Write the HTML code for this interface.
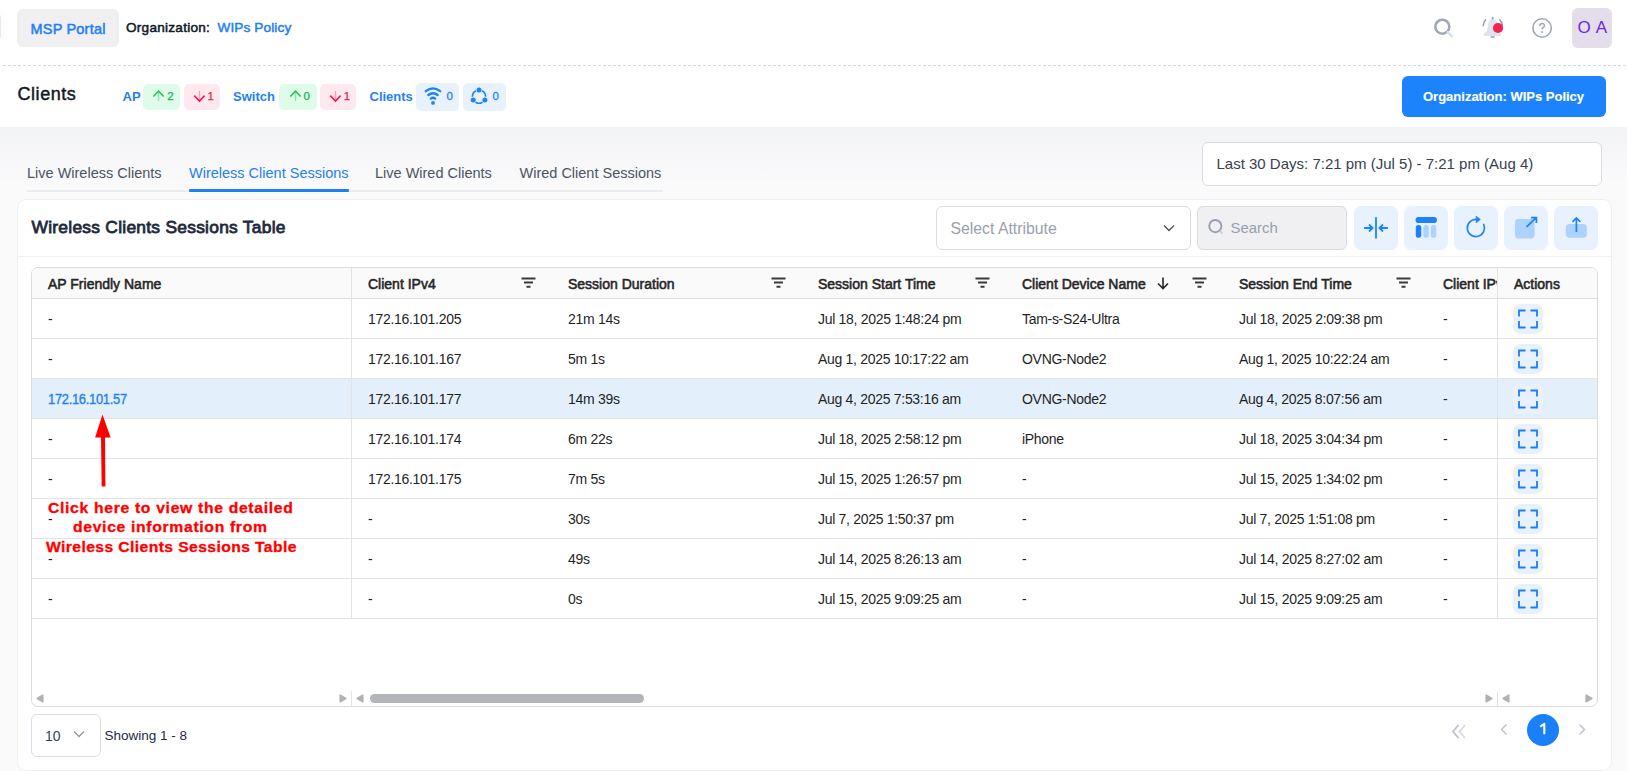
<!DOCTYPE html>
<html><head><meta charset="utf-8"><style>
html,body{margin:0;padding:0;}
body{width:1627px;height:771px;overflow:hidden;position:relative;background:#fafafb;font-family:"Liberation Sans", sans-serif;}
.t{position:absolute;white-space:nowrap;}
.b{position:absolute;}
</style></head><body>
<div class="b" style="left:0px;top:127px;width:1627px;height:58px;background:linear-gradient(rgba(20,40,90,0.03),rgba(20,40,90,0));"></div>
<div class="b" style="left:0px;top:0px;width:1627px;height:127px;background:#fff;"></div>
<div class="b" style="left:-21px;top:13px;width:22px;height:28px;border:1px solid #e9eaed;border-radius:5px;background:#fff;box-shadow:0 0 14px rgba(0,0,0,0.035);box-sizing:border-box;"></div>
<div class="b" style="left:17px;top:9px;width:102px;height:38px;background:#f0f0f3;border-radius:6px;"></div>
<div class="t" style="left:30.5px;top:21.53px;font-size:14.5px;line-height:14.5px;color:#1f7ff3;font-weight:400;letter-spacing:0.2px;-webkit-text-stroke:0.5px #1f7ff3;">MSP Portal</div>
<div class="t" style="left:126px;top:20.69px;font-size:13.6px;line-height:13.6px;color:#101828;font-weight:400;letter-spacing:0.25px;-webkit-text-stroke:0.5px #101828;">Organization:</div>
<div class="t" style="left:217.5px;top:20.69px;font-size:13.6px;line-height:13.6px;color:#1f7ff3;font-weight:400;letter-spacing:0.12px;-webkit-text-stroke:0.5px #1f7ff3;">WIPs Policy</div>
<svg class="b" style="left:1430px;top:14px" width="28" height="28" viewBox="0 0 28 28">
<circle cx="12.3" cy="12.7" r="7" fill="none" stroke="#a0a8b8" stroke-width="2.6"/>
<line x1="17.8" y1="18.2" x2="22" y2="22.4" stroke="#dde1e7" stroke-width="2.6" stroke-linecap="round"/>
</svg>
<svg class="b" style="left:1478px;top:14px" width="30" height="28" viewBox="0 0 30 28">
<path d="M10.6 8.6 Q10.8 5.8 13.6 5.8 H16 Q18.8 5.8 19 8.6 L19.8 16 Q20.2 17.8 22.6 19.2 Q23.4 19.8 23.2 20.8 Q23 21.9 21.8 21.9 H7.2 Q6 21.9 5.8 20.8 Q5.6 19.8 6.4 19.2 Q8.8 17.8 9.2 16 Z" fill="#dfe3ea"/>
<path d="M7.9 5.2 Q5.6 7.6 5.2 12.3" fill="none" stroke="#94a0b6" stroke-width="1.6"/>
<path d="M21.4 5.4 Q24 7.6 24.6 11.8" fill="none" stroke="#94a0b6" stroke-width="1.6"/>
<line x1="14.6" y1="2.9" x2="14.6" y2="5.6" stroke="#94a0b6" stroke-width="1.8"/>
<line x1="12.7" y1="23" x2="16.7" y2="23" stroke="#94a0b6" stroke-width="1.5"/>
<circle cx="20" cy="14" r="5.1" fill="#f5214e"/>
</svg>
<svg class="b" style="left:1528px;top:14px" width="28" height="28" viewBox="0 0 28 28">
<circle cx="14.1" cy="14" r="9.2" fill="none" stroke="#a0a8b8" stroke-width="1.6"/>
<path d="M11.8 11.9 Q11.8 9.6 14.1 9.6 Q16.4 9.6 16.4 11.7 Q16.4 13 14.9 13.7 Q14.1 14.1 14.1 15.4" fill="none" stroke="#a0a8b8" stroke-width="1.5"/>
<circle cx="14.1" cy="17.9" r="1" fill="#a0a8b8"/>
</svg>
<div class="b" style="left:1572px;top:8px;width:40px;height:40px;background:#e4ddeb;border-radius:6px;"></div>
<div class="t" style="left:1577.5px;top:19.31px;font-size:17px;line-height:17px;color:#6a2ae0;font-weight:400;letter-spacing:0.6px;">O A</div>
<div class="b" style="left:3px;top:65px;width:1624px;height:1px;background-image:linear-gradient(to right,#d3d8e4 0,#d3d8e4 3px,transparent 3px);background-size:5px 1px;"></div>
<div class="t" style="left:17.5px;top:85.26px;font-size:18px;line-height:18px;color:#111827;font-weight:400;letter-spacing:0.55px;-webkit-text-stroke:0.45px #111827;">Clients</div>
<div class="t" style="left:122.5px;top:89.50px;font-size:13px;line-height:13px;color:#1f7ff3;font-weight:700;letter-spacing:0px;">AP</div>
<div class="b" style="left:143px;top:84px;width:37px;height:26px;background:#dffcea;border-radius:5px;"></div>
<div class="b" style="left:184px;top:84px;width:36px;height:26px;background:#ffe9ef;border-radius:5px;"></div>
<div class="t" style="left:233px;top:89.50px;font-size:13px;line-height:13px;color:#1f7ff3;font-weight:700;letter-spacing:0px;">Switch</div>
<div class="b" style="left:279px;top:84px;width:38px;height:26px;background:#dffcea;border-radius:5px;"></div>
<div class="b" style="left:320px;top:84px;width:36px;height:26px;background:#ffe9ef;border-radius:5px;"></div>
<div class="t" style="left:369.5px;top:89.50px;font-size:13px;line-height:13px;color:#1f7ff3;font-weight:700;letter-spacing:0px;">Clients</div>
<div class="b" style="left:416px;top:83px;width:43px;height:28px;background:#e8f2fe;border-radius:5px;"></div>
<div class="b" style="left:463px;top:83px;width:43px;height:28px;background:#e8f2fe;border-radius:5px;"></div>
<svg class="b" style="left:152px;top:89px" width="14" height="14" viewBox="0 0 14 14"><path d="M6.5 2.6V11.8" stroke="#8fe0ae" stroke-width="1.4" fill="none"/><path d="M1.3 7.6 6.5 2.2 11.7 7.6" fill="none" stroke="#20c15c" stroke-width="1.5"/></svg>
<div class="t" style="left:167.3px;top:91.07px;font-size:11.5px;line-height:11.5px;color:#18b552;font-weight:400;letter-spacing:0px;-webkit-text-stroke:0.25px currentColor;">2</div>
<svg class="b" style="left:192px;top:89px" width="14" height="14" viewBox="0 0 14 14"><path d="M7.5 2V11.5" stroke="#f7a3bb" stroke-width="1.4" fill="none"/><path d="M2.2 6.6 7.5 12 12.6 6.6" fill="none" stroke="#f5174e" stroke-width="1.6"/></svg>
<div class="t" style="left:207.5px;top:91.07px;font-size:11.5px;line-height:11.5px;color:#f01a50;font-weight:400;letter-spacing:0px;-webkit-text-stroke:0.25px currentColor;">1</div>
<svg class="b" style="left:289px;top:89px" width="14" height="14" viewBox="0 0 14 14"><path d="M6.5 2.6V11.8" stroke="#8fe0ae" stroke-width="1.4" fill="none"/><path d="M1.3 7.6 6.5 2.2 11.7 7.6" fill="none" stroke="#20c15c" stroke-width="1.5"/></svg>
<div class="t" style="left:303.4px;top:91.07px;font-size:11.5px;line-height:11.5px;color:#18b552;font-weight:400;letter-spacing:0px;-webkit-text-stroke:0.25px currentColor;">0</div>
<svg class="b" style="left:328px;top:89px" width="14" height="14" viewBox="0 0 14 14"><path d="M7.5 2V11.5" stroke="#f7a3bb" stroke-width="1.4" fill="none"/><path d="M2.2 6.6 7.5 12 12.6 6.6" fill="none" stroke="#f5174e" stroke-width="1.6"/></svg>
<div class="t" style="left:343.8px;top:91.07px;font-size:11.5px;line-height:11.5px;color:#f01a50;font-weight:400;letter-spacing:0px;-webkit-text-stroke:0.25px currentColor;">1</div>
<svg class="b" style="left:416px;top:83px" width="30" height="28" viewBox="0 0 30 28">
<path d="M9.8 8.2 Q17 2.6 24.2 8.2" fill="none" stroke="#1f80fb" stroke-width="2.3" stroke-linecap="round"/>
<path d="M12.3 12 Q17 8.4 21.7 12" fill="none" stroke="#1f80fb" stroke-width="2.3" stroke-linecap="round"/>
<path d="M14.8 15.6 Q17 14 19.2 15.6" fill="none" stroke="#1f80fb" stroke-width="2.3" stroke-linecap="round"/>
<circle cx="17" cy="19.9" r="1.9" fill="#1f80fb"/>
</svg>
<div class="t" style="left:446.5px;top:91.27px;font-size:11.5px;line-height:11.5px;color:#1f80fb;font-weight:400;letter-spacing:0px;-webkit-text-stroke:0.3px #1f80fb;">0</div>
<svg class="b" style="left:463px;top:83px" width="32" height="28" viewBox="0 0 32 28">
<path d="M19.10 7.77 A6.6 6.6 0 0 1 22.60 13.83M19.50 19.20 A6.6 6.6 0 0 1 12.50 19.20M9.40 13.83 A6.6 6.6 0 0 1 12.90 7.77" fill="none" stroke="#1f80fb" stroke-width="1.6"/>
<circle cx="16" cy="7.1" r="2.5" fill="#1f80fb"/>
<circle cx="10.2" cy="17" r="2.5" fill="#1f80fb"/>
<circle cx="21.9" cy="17" r="2.5" fill="#1f80fb"/>
</svg>
<div class="t" style="left:492.5px;top:91.27px;font-size:11.5px;line-height:11.5px;color:#1f80fb;font-weight:400;letter-spacing:0px;-webkit-text-stroke:0.3px #1f80fb;">0</div>
<div class="b" style="left:1402px;top:76px;width:204px;height:41px;background:#1c83fc;border-radius:6px;"></div>
<div class="t" style="left:1423px;top:90.00px;font-size:13px;line-height:13px;color:#fff;font-weight:700;letter-spacing:0px;-webkit-text-stroke:0.15px #fff;">Organization: WIPs Policy</div>
<div class="b" style="left:27px;top:190px;width:636px;height:2px;background:#ebecee;"></div>
<div class="t" style="left:27px;top:165.73px;font-size:14.5px;line-height:14.5px;color:#4b5563;font-weight:400;letter-spacing:0px;">Live Wireless Clients</div>
<div class="t" style="left:189px;top:165.73px;font-size:14.5px;line-height:14.5px;color:#1f7ff3;font-weight:400;letter-spacing:0px;">Wireless Client Sessions</div>
<div class="b" style="left:189px;top:189px;width:160px;height:3px;background:#1f7ff3;border-radius:1px;"></div>
<div class="t" style="left:375px;top:165.73px;font-size:14.5px;line-height:14.5px;color:#4b5563;font-weight:400;letter-spacing:0px;">Live Wired Clients</div>
<div class="t" style="left:519.5px;top:165.73px;font-size:14.5px;line-height:14.5px;color:#4b5563;font-weight:400;letter-spacing:0px;">Wired Client Sessions</div>
<div class="b" style="left:1202px;top:142px;width:400px;height:44px;background:#fff;border:1px solid #d9dde6;border-radius:6px;box-sizing:border-box;"></div>
<div class="t" style="left:1216.5px;top:155.90px;font-size:15px;line-height:15px;color:#374151;font-weight:400;letter-spacing:0px;">Last 30 Days: 7:21 pm (Jul 5) - 7:21 pm (Aug 4)</div>
<div class="b" style="left:17px;top:199px;width:1595px;height:572px;background:#fff;border:1px solid #eeeff1;border-radius:9px;box-sizing:border-box;"></div>
<div class="t" style="left:31.5px;top:218.77px;font-size:17.4px;line-height:17.4px;color:#1e293b;font-weight:400;letter-spacing:0.26px;-webkit-text-stroke:0.8px #1e293b;">Wireless Clients Sessions Table</div>
<div class="b" style="left:18px;top:256px;width:1593px;height:1px;background:#eeeff1;"></div>
<div class="b" style="left:936px;top:206px;width:255px;height:44px;background:#fff;border:1px solid #d9dde6;border-radius:6px;box-sizing:border-box;"></div>
<div class="t" style="left:950.5px;top:220.63px;font-size:15.8px;line-height:15.8px;color:#9aa1ad;font-weight:400;letter-spacing:0px;">Select Attribute</div>
<svg class="b" style="left:1162px;top:222px" width="14" height="12" viewBox="0 0 14 12">
<path d="M2 3.5 7 8.5 12 3.5" fill="none" stroke="#4b5563" stroke-width="1.4"/></svg>
<div class="b" style="left:1197px;top:206px;width:150px;height:44px;background:#f0f0f3;border:1px solid #d9dde6;border-radius:6px;box-sizing:border-box;"></div>
<svg class="b" style="left:1206px;top:218px" width="20" height="20" viewBox="0 0 20 20">
<circle cx="9.3" cy="8.1" r="6.1" fill="none" stroke="#98a0b0" stroke-width="1.9"/>
<line x1="14" y1="13" x2="16.4" y2="15.5" stroke="#c9ced8" stroke-width="2"/></svg>
<div class="t" style="left:1230.5px;top:220.59px;font-size:14.9px;line-height:14.9px;color:#98a0b0;font-weight:400;letter-spacing:0px;">Search</div>
<div class="b" style="left:1354px;top:206px;width:44px;height:44px;background:#e8f2fe;border-radius:7px;"></div>
<div class="b" style="left:1404px;top:206px;width:44px;height:44px;background:#e8f2fe;border-radius:7px;"></div>
<div class="b" style="left:1454px;top:206px;width:44px;height:44px;background:#e8f2fe;border-radius:7px;"></div>
<div class="b" style="left:1504px;top:206px;width:44px;height:44px;background:#e8f2fe;border-radius:7px;"></div>
<div class="b" style="left:1554px;top:206px;width:44px;height:44px;background:#e8f2fe;border-radius:7px;"></div>
<svg class="b" style="left:1354px;top:206px" width="44" height="44" viewBox="0 0 44 44">
<line x1="22" y1="11.3" x2="22" y2="32.4" stroke="#1f80fb" stroke-width="1.8"/>
<path d="M10.1 22H18.6M15 18.5 18.6 22 15 25.5" fill="none" stroke="#1f80fb" stroke-width="1.8"/>
<path d="M33.9 22H25.4M29 18.5 25.4 22 29 25.5" fill="none" stroke="#1f80fb" stroke-width="1.8"/></svg>
<svg class="b" style="left:1404px;top:206px" width="44" height="44" viewBox="0 0 44 44">
<rect x="11.6" y="11" width="21.3" height="6" rx="2.8" fill="#1f80fb"/>
<rect x="11.8" y="19.1" width="5.5" height="12.7" rx="2.5" fill="#1f80fb"/>
<rect x="19.3" y="19.1" width="5.5" height="12.7" rx="2.5" fill="#add2fd"/>
<rect x="26.8" y="19.1" width="5.5" height="12.7" rx="2.5" fill="#add2fd"/></svg>
<svg class="b" style="left:1454px;top:206px" width="44" height="44" viewBox="0 0 44 44">
<path d="M22.6 13.4 A8.6 8.6 0 1 0 29.7 18.4" fill="none" stroke="#1f80fb" stroke-width="1.6" stroke-linecap="round"/>
<path d="M22.2 10 26.4 13.4 22.2 16.9Z" fill="#1f80fb" stroke="#1f80fb" stroke-width="0.6" stroke-linejoin="round"/></svg>
<svg class="b" style="left:1504px;top:206px" width="44" height="44" viewBox="0 0 44 44">
<rect x="11" y="13" width="19.6" height="19.4" rx="3.6" fill="#add2fd"/>
<path d="M22.6 20.8 32.2 11.6M26.9 11.6H32.4V17" fill="none" stroke="#1f80fb" stroke-width="1.8"/></svg>
<svg class="b" style="left:1554px;top:206px" width="44" height="44" viewBox="0 0 44 44">
<rect x="11.8" y="17.9" width="21.1" height="13.9" rx="4" fill="#add2fd"/>
<path d="M22.4 26V12.6M18.5 15.9 22.4 12 26.3 15.9" fill="none" stroke="#1f80fb" stroke-width="1.7"/></svg>
<div class="b" style="left:31px;top:267px;width:1567px;height:440px;border:1px solid #dcdcdc;border-radius:7px;box-sizing:border-box;background:#fff;"></div>
<div class="b" style="left:32px;top:268px;width:1565px;height:30px;background:#fafafa;border-radius:6px 6px 0 0;"></div>
<div class="b" style="left:32px;top:298px;width:1565px;height:1px;background:#dedede;"></div>
<div class="b" style="left:32px;top:338px;width:1565px;height:1px;background:#e3e3e3;"></div>
<div class="t" style="left:48px;top:312.15px;font-size:14px;line-height:14px;color:#1f1f1f;font-weight:400;letter-spacing:-0.3px;">-</div>
<div class="t" style="left:368px;top:312.15px;font-size:14px;line-height:14px;color:#1f1f1f;font-weight:400;letter-spacing:-0.3px;">172.16.101.205</div>
<div class="t" style="left:568px;top:312.15px;font-size:14px;line-height:14px;color:#1f1f1f;font-weight:400;letter-spacing:-0.3px;">21m 14s</div>
<div class="t" style="left:818px;top:312.15px;font-size:14px;line-height:14px;color:#1f1f1f;font-weight:400;letter-spacing:-0.3px;">Jul 18, 2025 1:48:24 pm</div>
<div class="t" style="left:1022px;top:312.15px;font-size:14px;line-height:14px;color:#1f1f1f;font-weight:400;letter-spacing:-0.3px;">Tam-s-S24-Ultra</div>
<div class="t" style="left:1239px;top:312.15px;font-size:14px;line-height:14px;color:#1f1f1f;font-weight:400;letter-spacing:-0.3px;">Jul 18, 2025 2:09:38 pm</div>
<div class="t" style="left:1443px;top:312.15px;font-size:14px;line-height:14px;color:#1f1f1f;font-weight:400;letter-spacing:-0.3px;">-</div>
<svg class="b" style="left:1513px;top:304px" width="30" height="30" viewBox="0 0 30 30">
<rect x="0" y="0" width="30" height="30" rx="7" fill="#e8f1fd"/>
<path d="M6 12.5V6.5H12.5M17.5 6.5H24V12.5M24 17V23.5H17.5M12.5 23.5H6V17" fill="none" stroke="#1a7ff5" stroke-width="1.8"/></svg>
<div class="b" style="left:32px;top:378px;width:1565px;height:1px;background:#e3e3e3;"></div>
<div class="t" style="left:48px;top:352.15px;font-size:14px;line-height:14px;color:#1f1f1f;font-weight:400;letter-spacing:-0.3px;">-</div>
<div class="t" style="left:368px;top:352.15px;font-size:14px;line-height:14px;color:#1f1f1f;font-weight:400;letter-spacing:-0.3px;">172.16.101.167</div>
<div class="t" style="left:568px;top:352.15px;font-size:14px;line-height:14px;color:#1f1f1f;font-weight:400;letter-spacing:-0.3px;">5m 1s</div>
<div class="t" style="left:818px;top:352.15px;font-size:14px;line-height:14px;color:#1f1f1f;font-weight:400;letter-spacing:-0.3px;">Aug 1, 2025 10:17:22 am</div>
<div class="t" style="left:1022px;top:352.15px;font-size:14px;line-height:14px;color:#1f1f1f;font-weight:400;letter-spacing:-0.3px;">OVNG-Node2</div>
<div class="t" style="left:1239px;top:352.15px;font-size:14px;line-height:14px;color:#1f1f1f;font-weight:400;letter-spacing:-0.3px;">Aug 1, 2025 10:22:24 am</div>
<div class="t" style="left:1443px;top:352.15px;font-size:14px;line-height:14px;color:#1f1f1f;font-weight:400;letter-spacing:-0.3px;">-</div>
<svg class="b" style="left:1513px;top:344px" width="30" height="30" viewBox="0 0 30 30">
<rect x="0" y="0" width="30" height="30" rx="7" fill="#e8f1fd"/>
<path d="M6 12.5V6.5H12.5M17.5 6.5H24V12.5M24 17V23.5H17.5M12.5 23.5H6V17" fill="none" stroke="#1a7ff5" stroke-width="1.8"/></svg>
<div class="b" style="left:32px;top:379px;width:1565px;height:39px;background:#e3f0fc;"></div>
<div class="b" style="left:32px;top:418px;width:1565px;height:1px;background:#e3e3e3;"></div>
<div class="t" style="left:48px;top:392.15px;font-size:14px;line-height:14px;color:#1f7ff3;font-weight:400;letter-spacing:-0.3px;-webkit-text-stroke:0.35px #1f7ff3;transform:scaleX(0.92);transform-origin:0 0;">172.16.101.57</div>
<div class="t" style="left:368px;top:392.15px;font-size:14px;line-height:14px;color:#1f1f1f;font-weight:400;letter-spacing:-0.3px;">172.16.101.177</div>
<div class="t" style="left:568px;top:392.15px;font-size:14px;line-height:14px;color:#1f1f1f;font-weight:400;letter-spacing:-0.3px;">14m 39s</div>
<div class="t" style="left:818px;top:392.15px;font-size:14px;line-height:14px;color:#1f1f1f;font-weight:400;letter-spacing:-0.3px;">Aug 4, 2025 7:53:16 am</div>
<div class="t" style="left:1022px;top:392.15px;font-size:14px;line-height:14px;color:#1f1f1f;font-weight:400;letter-spacing:-0.3px;">OVNG-Node2</div>
<div class="t" style="left:1239px;top:392.15px;font-size:14px;line-height:14px;color:#1f1f1f;font-weight:400;letter-spacing:-0.3px;">Aug 4, 2025 8:07:56 am</div>
<div class="t" style="left:1443px;top:392.15px;font-size:14px;line-height:14px;color:#1f1f1f;font-weight:400;letter-spacing:-0.3px;">-</div>
<svg class="b" style="left:1513px;top:384px" width="30" height="30" viewBox="0 0 30 30">
<rect x="0" y="0" width="30" height="30" rx="7" fill="#e8f1fd"/>
<path d="M6 12.5V6.5H12.5M17.5 6.5H24V12.5M24 17V23.5H17.5M12.5 23.5H6V17" fill="none" stroke="#1a7ff5" stroke-width="1.8"/></svg>
<div class="b" style="left:32px;top:458px;width:1565px;height:1px;background:#e3e3e3;"></div>
<div class="t" style="left:48px;top:432.15px;font-size:14px;line-height:14px;color:#1f1f1f;font-weight:400;letter-spacing:-0.3px;">-</div>
<div class="t" style="left:368px;top:432.15px;font-size:14px;line-height:14px;color:#1f1f1f;font-weight:400;letter-spacing:-0.3px;">172.16.101.174</div>
<div class="t" style="left:568px;top:432.15px;font-size:14px;line-height:14px;color:#1f1f1f;font-weight:400;letter-spacing:-0.3px;">6m 22s</div>
<div class="t" style="left:818px;top:432.15px;font-size:14px;line-height:14px;color:#1f1f1f;font-weight:400;letter-spacing:-0.3px;">Jul 18, 2025 2:58:12 pm</div>
<div class="t" style="left:1022px;top:432.15px;font-size:14px;line-height:14px;color:#1f1f1f;font-weight:400;letter-spacing:-0.3px;">iPhone</div>
<div class="t" style="left:1239px;top:432.15px;font-size:14px;line-height:14px;color:#1f1f1f;font-weight:400;letter-spacing:-0.3px;">Jul 18, 2025 3:04:34 pm</div>
<div class="t" style="left:1443px;top:432.15px;font-size:14px;line-height:14px;color:#1f1f1f;font-weight:400;letter-spacing:-0.3px;">-</div>
<svg class="b" style="left:1513px;top:424px" width="30" height="30" viewBox="0 0 30 30">
<rect x="0" y="0" width="30" height="30" rx="7" fill="#e8f1fd"/>
<path d="M6 12.5V6.5H12.5M17.5 6.5H24V12.5M24 17V23.5H17.5M12.5 23.5H6V17" fill="none" stroke="#1a7ff5" stroke-width="1.8"/></svg>
<div class="b" style="left:32px;top:498px;width:1565px;height:1px;background:#e3e3e3;"></div>
<div class="t" style="left:48px;top:472.15px;font-size:14px;line-height:14px;color:#1f1f1f;font-weight:400;letter-spacing:-0.3px;">-</div>
<div class="t" style="left:368px;top:472.15px;font-size:14px;line-height:14px;color:#1f1f1f;font-weight:400;letter-spacing:-0.3px;">172.16.101.175</div>
<div class="t" style="left:568px;top:472.15px;font-size:14px;line-height:14px;color:#1f1f1f;font-weight:400;letter-spacing:-0.3px;">7m 5s</div>
<div class="t" style="left:818px;top:472.15px;font-size:14px;line-height:14px;color:#1f1f1f;font-weight:400;letter-spacing:-0.3px;">Jul 15, 2025 1:26:57 pm</div>
<div class="t" style="left:1022px;top:472.15px;font-size:14px;line-height:14px;color:#1f1f1f;font-weight:400;letter-spacing:-0.3px;">-</div>
<div class="t" style="left:1239px;top:472.15px;font-size:14px;line-height:14px;color:#1f1f1f;font-weight:400;letter-spacing:-0.3px;">Jul 15, 2025 1:34:02 pm</div>
<div class="t" style="left:1443px;top:472.15px;font-size:14px;line-height:14px;color:#1f1f1f;font-weight:400;letter-spacing:-0.3px;">-</div>
<svg class="b" style="left:1513px;top:464px" width="30" height="30" viewBox="0 0 30 30">
<rect x="0" y="0" width="30" height="30" rx="7" fill="#e8f1fd"/>
<path d="M6 12.5V6.5H12.5M17.5 6.5H24V12.5M24 17V23.5H17.5M12.5 23.5H6V17" fill="none" stroke="#1a7ff5" stroke-width="1.8"/></svg>
<div class="b" style="left:32px;top:538px;width:1565px;height:1px;background:#e3e3e3;"></div>
<div class="t" style="left:48px;top:512.15px;font-size:14px;line-height:14px;color:#1f1f1f;font-weight:400;letter-spacing:-0.3px;">-</div>
<div class="t" style="left:368px;top:512.15px;font-size:14px;line-height:14px;color:#1f1f1f;font-weight:400;letter-spacing:-0.3px;">-</div>
<div class="t" style="left:568px;top:512.15px;font-size:14px;line-height:14px;color:#1f1f1f;font-weight:400;letter-spacing:-0.3px;">30s</div>
<div class="t" style="left:818px;top:512.15px;font-size:14px;line-height:14px;color:#1f1f1f;font-weight:400;letter-spacing:-0.3px;">Jul 7, 2025 1:50:37 pm</div>
<div class="t" style="left:1022px;top:512.15px;font-size:14px;line-height:14px;color:#1f1f1f;font-weight:400;letter-spacing:-0.3px;">-</div>
<div class="t" style="left:1239px;top:512.15px;font-size:14px;line-height:14px;color:#1f1f1f;font-weight:400;letter-spacing:-0.3px;">Jul 7, 2025 1:51:08 pm</div>
<div class="t" style="left:1443px;top:512.15px;font-size:14px;line-height:14px;color:#1f1f1f;font-weight:400;letter-spacing:-0.3px;">-</div>
<svg class="b" style="left:1513px;top:504px" width="30" height="30" viewBox="0 0 30 30">
<rect x="0" y="0" width="30" height="30" rx="7" fill="#e8f1fd"/>
<path d="M6 12.5V6.5H12.5M17.5 6.5H24V12.5M24 17V23.5H17.5M12.5 23.5H6V17" fill="none" stroke="#1a7ff5" stroke-width="1.8"/></svg>
<div class="b" style="left:32px;top:578px;width:1565px;height:1px;background:#e3e3e3;"></div>
<div class="t" style="left:48px;top:552.15px;font-size:14px;line-height:14px;color:#1f1f1f;font-weight:400;letter-spacing:-0.3px;">-</div>
<div class="t" style="left:368px;top:552.15px;font-size:14px;line-height:14px;color:#1f1f1f;font-weight:400;letter-spacing:-0.3px;">-</div>
<div class="t" style="left:568px;top:552.15px;font-size:14px;line-height:14px;color:#1f1f1f;font-weight:400;letter-spacing:-0.3px;">49s</div>
<div class="t" style="left:818px;top:552.15px;font-size:14px;line-height:14px;color:#1f1f1f;font-weight:400;letter-spacing:-0.3px;">Jul 14, 2025 8:26:13 am</div>
<div class="t" style="left:1022px;top:552.15px;font-size:14px;line-height:14px;color:#1f1f1f;font-weight:400;letter-spacing:-0.3px;">-</div>
<div class="t" style="left:1239px;top:552.15px;font-size:14px;line-height:14px;color:#1f1f1f;font-weight:400;letter-spacing:-0.3px;">Jul 14, 2025 8:27:02 am</div>
<div class="t" style="left:1443px;top:552.15px;font-size:14px;line-height:14px;color:#1f1f1f;font-weight:400;letter-spacing:-0.3px;">-</div>
<svg class="b" style="left:1513px;top:544px" width="30" height="30" viewBox="0 0 30 30">
<rect x="0" y="0" width="30" height="30" rx="7" fill="#e8f1fd"/>
<path d="M6 12.5V6.5H12.5M17.5 6.5H24V12.5M24 17V23.5H17.5M12.5 23.5H6V17" fill="none" stroke="#1a7ff5" stroke-width="1.8"/></svg>
<div class="b" style="left:32px;top:618px;width:1565px;height:1px;background:#e3e3e3;"></div>
<div class="t" style="left:48px;top:592.15px;font-size:14px;line-height:14px;color:#1f1f1f;font-weight:400;letter-spacing:-0.3px;">-</div>
<div class="t" style="left:368px;top:592.15px;font-size:14px;line-height:14px;color:#1f1f1f;font-weight:400;letter-spacing:-0.3px;">-</div>
<div class="t" style="left:568px;top:592.15px;font-size:14px;line-height:14px;color:#1f1f1f;font-weight:400;letter-spacing:-0.3px;">0s</div>
<div class="t" style="left:818px;top:592.15px;font-size:14px;line-height:14px;color:#1f1f1f;font-weight:400;letter-spacing:-0.3px;">Jul 15, 2025 9:09:25 am</div>
<div class="t" style="left:1022px;top:592.15px;font-size:14px;line-height:14px;color:#1f1f1f;font-weight:400;letter-spacing:-0.3px;">-</div>
<div class="t" style="left:1239px;top:592.15px;font-size:14px;line-height:14px;color:#1f1f1f;font-weight:400;letter-spacing:-0.3px;">Jul 15, 2025 9:09:25 am</div>
<div class="t" style="left:1443px;top:592.15px;font-size:14px;line-height:14px;color:#1f1f1f;font-weight:400;letter-spacing:-0.3px;">-</div>
<svg class="b" style="left:1513px;top:584px" width="30" height="30" viewBox="0 0 30 30">
<rect x="0" y="0" width="30" height="30" rx="7" fill="#e8f1fd"/>
<path d="M6 12.5V6.5H12.5M17.5 6.5H24V12.5M24 17V23.5H17.5M12.5 23.5H6V17" fill="none" stroke="#1a7ff5" stroke-width="1.8"/></svg>
<div class="t" style="left:48px;top:277.15px;font-size:14px;line-height:14px;color:#262626;font-weight:400;letter-spacing:0px;-webkit-text-stroke:0.55px #262626;">AP Friendly Name</div>
<div class="t" style="left:368px;top:277.15px;font-size:14px;line-height:14px;color:#262626;font-weight:400;letter-spacing:0px;-webkit-text-stroke:0.55px #262626;">Client IPv4</div>
<div class="t" style="left:568px;top:277.15px;font-size:14px;line-height:14px;color:#262626;font-weight:400;letter-spacing:0px;-webkit-text-stroke:0.55px #262626;">Session Duration</div>
<div class="t" style="left:818px;top:277.15px;font-size:14px;line-height:14px;color:#262626;font-weight:400;letter-spacing:0px;-webkit-text-stroke:0.55px #262626;">Session Start Time</div>
<div class="t" style="left:1022px;top:277.15px;font-size:14px;line-height:14px;color:#262626;font-weight:400;letter-spacing:0px;-webkit-text-stroke:0.55px #262626;">Client Device Name</div>
<div class="t" style="left:1239px;top:277.15px;font-size:14px;line-height:14px;color:#262626;font-weight:400;letter-spacing:0px;-webkit-text-stroke:0.55px #262626;">Session End Time</div>
<div class="t" style="left:1443px;top:277.15px;font-size:14px;line-height:14px;color:#262626;font-weight:400;letter-spacing:0px;-webkit-text-stroke:0.55px #262626;">Client IPv6</div>
<svg class="b" style="left:521px;top:277px" width="15" height="12" viewBox="0 0 15 12"><path d="M0.5 1.5H14.5M3 5.5H12M5.5 9.8H9.5" fill="none" stroke="#3a3a3a" stroke-width="1.9"/></svg>
<svg class="b" style="left:771px;top:277px" width="15" height="12" viewBox="0 0 15 12"><path d="M0.5 1.5H14.5M3 5.5H12M5.5 9.8H9.5" fill="none" stroke="#3a3a3a" stroke-width="1.9"/></svg>
<svg class="b" style="left:975px;top:277px" width="15" height="12" viewBox="0 0 15 12"><path d="M0.5 1.5H14.5M3 5.5H12M5.5 9.8H9.5" fill="none" stroke="#3a3a3a" stroke-width="1.9"/></svg>
<svg class="b" style="left:1192px;top:277px" width="15" height="12" viewBox="0 0 15 12"><path d="M0.5 1.5H14.5M3 5.5H12M5.5 9.8H9.5" fill="none" stroke="#3a3a3a" stroke-width="1.9"/></svg>
<svg class="b" style="left:1396px;top:277px" width="15" height="12" viewBox="0 0 15 12"><path d="M0.5 1.5H14.5M3 5.5H12M5.5 9.8H9.5" fill="none" stroke="#3a3a3a" stroke-width="1.9"/></svg>
<svg class="b" style="left:1157px;top:277px" width="12" height="13" viewBox="0 0 12 13">
<path d="M6 0.5V11.5M1 6.5 6 11.5 11 6.5" fill="none" stroke="#262626" stroke-width="1.6"/></svg>
<div class="b" style="left:1497px;top:268px;width:100px;height:438px;background:transparent;"></div>
<div class="b" style="left:1498px;top:268px;width:99px;height:30px;background:#fafafa;border-radius:0 6px 0 0;"></div>
<div class="t" style="left:1514px;top:277.15px;font-size:14px;line-height:14px;color:#262626;font-weight:400;letter-spacing:0px;-webkit-text-stroke:0.55px #262626;">Actions</div>
<div class="b" style="left:351px;top:268px;width:1px;height:350px;background:#e3e3e3;"></div>
<div class="b" style="left:1497px;top:268px;width:1px;height:350px;background:#e3e3e3;"></div>
<div class="b" style="left:351px;top:691px;width:1px;height:15px;background:#e3e3e3;"></div>
<div class="b" style="left:1497px;top:691px;width:1px;height:15px;background:#e3e3e3;"></div>
<svg class="b" style="left:36px;top:694px" width="8" height="9" viewBox="0 0 8 9"><path d="M6.8 1.2V7.8L1.2 4.5Z" fill="#b1b2b7" stroke="#b1b2b7" stroke-width="1.6" stroke-linejoin="round"/></svg>
<svg class="b" style="left:339px;top:694px" width="8" height="9" viewBox="0 0 8 9"><path d="M1.2 1.2V7.8L6.8 4.5Z" fill="#b1b2b7" stroke="#b1b2b7" stroke-width="1.6" stroke-linejoin="round"/></svg>
<svg class="b" style="left:356px;top:694px" width="8" height="9" viewBox="0 0 8 9"><path d="M6.8 1.2V7.8L1.2 4.5Z" fill="#b1b2b7" stroke="#b1b2b7" stroke-width="1.6" stroke-linejoin="round"/></svg>
<svg class="b" style="left:1485px;top:694px" width="8" height="9" viewBox="0 0 8 9"><path d="M1.2 1.2V7.8L6.8 4.5Z" fill="#b1b2b7" stroke="#b1b2b7" stroke-width="1.6" stroke-linejoin="round"/></svg>
<svg class="b" style="left:1502px;top:694px" width="8" height="9" viewBox="0 0 8 9"><path d="M6.8 1.2V7.8L1.2 4.5Z" fill="#b1b2b7" stroke="#b1b2b7" stroke-width="1.6" stroke-linejoin="round"/></svg>
<svg class="b" style="left:1585px;top:694px" width="8" height="9" viewBox="0 0 8 9"><path d="M1.2 1.2V7.8L6.8 4.5Z" fill="#b1b2b7" stroke="#b1b2b7" stroke-width="1.6" stroke-linejoin="round"/></svg>
<div class="b" style="left:370px;top:694px;width:274px;height:9px;background:#b4b5ba;border-radius:5px;"></div>
<div class="b" style="left:31px;top:714px;width:70px;height:43px;background:#fff;border:1px solid #d9dde6;border-radius:6px;box-sizing:border-box;"></div>
<div class="t" style="left:45px;top:729.15px;font-size:14px;line-height:14px;color:#374151;font-weight:400;letter-spacing:0px;">10</div>
<svg class="b" style="left:72px;top:729px" width="14" height="10" viewBox="0 0 14 10">
<path d="M2 2.5 7 7.5 12 2.5" fill="none" stroke="#8b95a7" stroke-width="1.3"/></svg>
<div class="t" style="left:104.5px;top:729.07px;font-size:13.5px;line-height:13.5px;color:#1e2a44;font-weight:400;letter-spacing:0px;">Showing 1 - 8</div>
<svg class="b" style="left:1450px;top:722px" width="20" height="18" viewBox="0 0 20 18">
<path d="M8.5 3 3 9.5 8.5 16" fill="none" stroke="#b9c0cd" stroke-width="1.8"/>
<path d="M15 3 9.5 9.5 15 16" fill="none" stroke="#d7dbe3" stroke-width="1.8"/></svg>
<svg class="b" style="left:1498px;top:722px" width="12" height="16" viewBox="0 0 12 16">
<path d="M8.5 2.5 3.5 7.5 8.5 12.5" fill="none" stroke="#bcc3d0" stroke-width="1.5"/></svg>
<div class="b" style="left:1527px;top:714px;width:32px;height:32px;background:#1a80f8;border-radius:50%;"></div>
<svg class="b" style="left:1527px;top:714px" width="32" height="32" viewBox="0 0 32 32"><path d="M13.2 12.6 17.3 9.9V20.2" fill="none" stroke="#fff" stroke-width="2.1" stroke-linejoin="round"/></svg>
<svg class="b" style="left:1576px;top:722px" width="12" height="16" viewBox="0 0 12 16">
<path d="M3.5 2.5 8.5 7.5 3.5 12.5" fill="none" stroke="#bcc3d0" stroke-width="1.5"/></svg>
<svg class="b" style="left:90px;top:410px" width="26" height="80" viewBox="0 0 26 80">
<path d="M12.5 4.4 L5.1 27.4 L20.6 27.4 Z" fill="#ff0000"/>
<path d="M11 26 L15 26 L15.4 76.5 L11.7 76.5 Z" fill="#ff0000"/></svg>
<div class="t" style="left:47.5px;top:500.65px;font-size:14px;line-height:14px;color:#ff0000;font-weight:700;letter-spacing:0.62px;transform:scaleX(1.12);transform-origin:0 0;-webkit-text-stroke:0.3px #ff0000;">Click here to view the detailed</div>
<div class="t" style="left:73px;top:519.65px;font-size:14px;line-height:14px;color:#ff0000;font-weight:700;letter-spacing:0.62px;transform:scaleX(1.12);transform-origin:0 0;-webkit-text-stroke:0.3px #ff0000;">device information from</div>
<div class="t" style="left:45.5px;top:539.65px;font-size:14px;line-height:14px;color:#ff0000;font-weight:700;letter-spacing:0.36px;transform:scaleX(1.12);transform-origin:0 0;-webkit-text-stroke:0.3px #ff0000;">Wireless Clients Sessions Table</div>
</body></html>
